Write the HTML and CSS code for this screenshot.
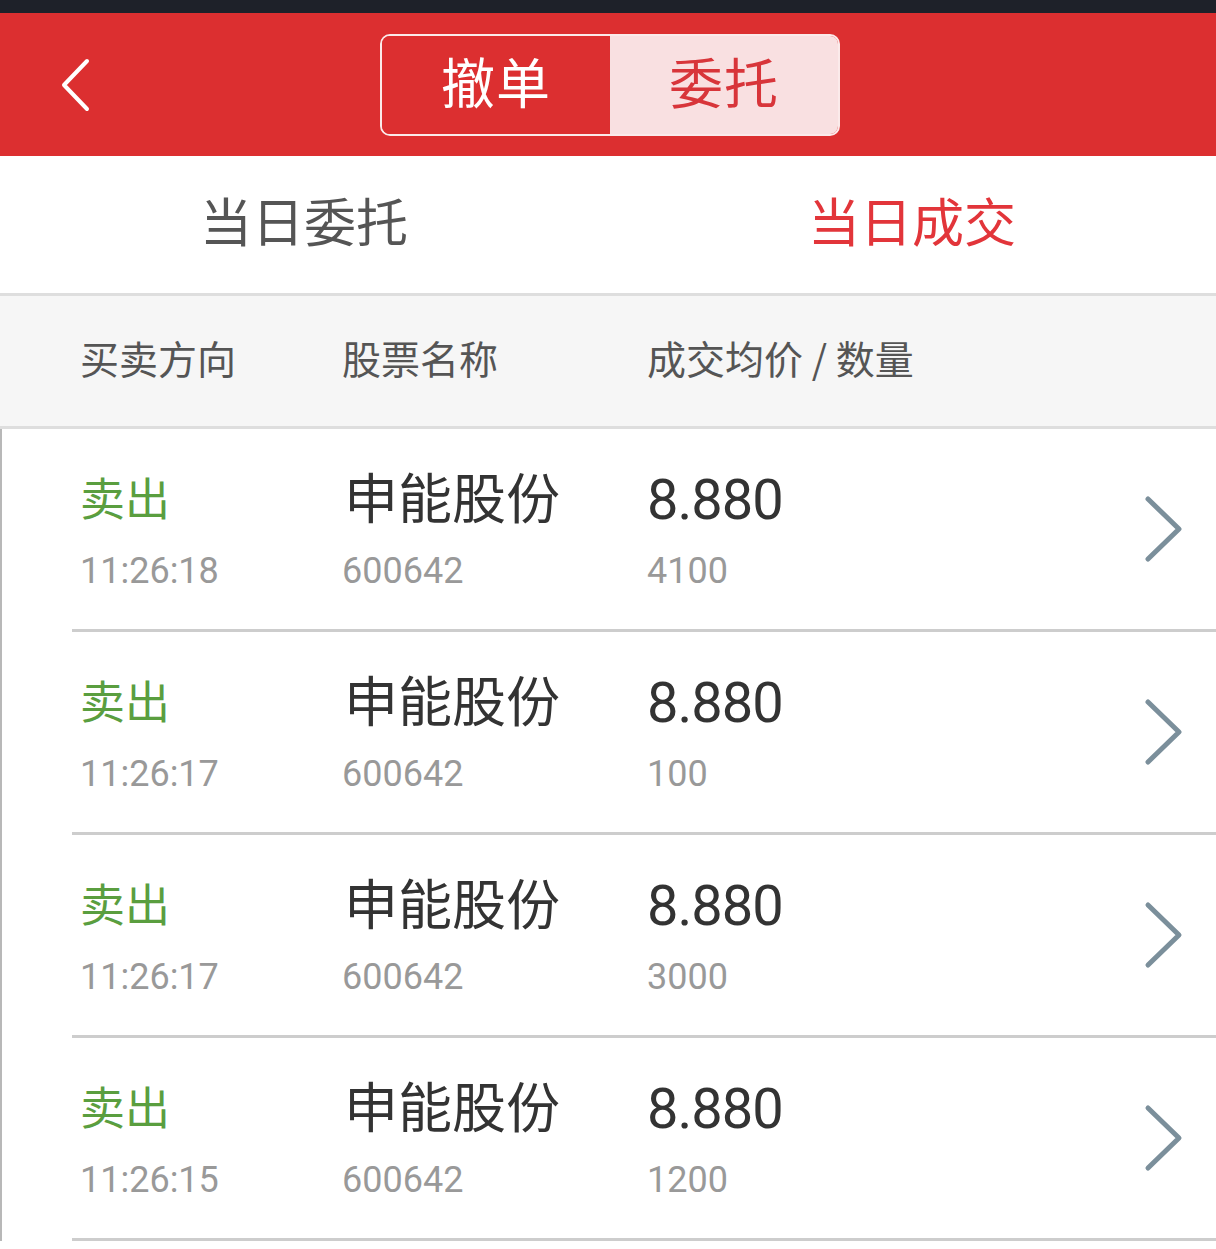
FILE: index.html
```
<!DOCTYPE html>
<html lang="zh-CN">
<head>
  <meta charset="UTF-8">
  <meta name="viewport" content="width=device-width, initial-scale=1.0">
  <title>当日成交</title>
  <link rel="stylesheet" href="styles.css">
</head>
<body>

  <div class="statusbar"></div>

  <div class="topbar">
    <div class="back">
      <svg width="32" height="56" viewBox="0 0 32 56">
        <path d="M27 3 L4 27 L27 51" fill="none" stroke="#fff" stroke-width="4" stroke-linecap="round" stroke-linejoin="round"/>
      </svg>
    </div>
    <div class="segment">
      <div class="seg seg-on">撤单</div>
      <div class="seg seg-off">委托</div>
    </div>
    <div></div>
  </div>

  <div class="tabs">
    <div class="tab">当日委托</div>
    <div class="tab tab-active">当日成交</div>
  </div>

  <div class="thead">
    <div class="col1">买卖方向</div>
    <div class="col2">股票名称</div>
    <div class="col3">成交均价 / 数量</div>
  </div>

  <div class="list">
    <div class="row">
      <div class="col1">
        <div class="main side">卖出</div>
        <div class="sub">11:26:18</div>
      </div>
      <div class="col2">
        <div class="main name">申能股份</div>
        <div class="sub">600642</div>
      </div>
      <div class="col3">
        <div class="main num">8.880</div>
        <div class="sub">4100</div>
      </div>
      <div class="arrow">
        <svg width="40" height="70" viewBox="0 0 40 70">
          <path d="M5 5 L36 35 L5 65" fill="none" stroke="#7b8f9b" stroke-width="5" stroke-linecap="round" stroke-linejoin="round"/>
        </svg>
      </div>
    </div>

    <div class="row">
      <div class="col1">
        <div class="main side">卖出</div>
        <div class="sub">11:26:17</div>
      </div>
      <div class="col2">
        <div class="main name">申能股份</div>
        <div class="sub">600642</div>
      </div>
      <div class="col3">
        <div class="main num">8.880</div>
        <div class="sub">100</div>
      </div>
      <div class="arrow">
        <svg width="40" height="70" viewBox="0 0 40 70">
          <path d="M5 5 L36 35 L5 65" fill="none" stroke="#7b8f9b" stroke-width="5" stroke-linecap="round" stroke-linejoin="round"/>
        </svg>
      </div>
    </div>

    <div class="row">
      <div class="col1">
        <div class="main side">卖出</div>
        <div class="sub">11:26:17</div>
      </div>
      <div class="col2">
        <div class="main name">申能股份</div>
        <div class="sub">600642</div>
      </div>
      <div class="col3">
        <div class="main num">8.880</div>
        <div class="sub">3000</div>
      </div>
      <div class="arrow">
        <svg width="40" height="70" viewBox="0 0 40 70">
          <path d="M5 5 L36 35 L5 65" fill="none" stroke="#7b8f9b" stroke-width="5" stroke-linecap="round" stroke-linejoin="round"/>
        </svg>
      </div>
    </div>

    <div class="row">
      <div class="col1">
        <div class="main side">卖出</div>
        <div class="sub">11:26:15</div>
      </div>
      <div class="col2">
        <div class="main name">申能股份</div>
        <div class="sub">600642</div>
      </div>
      <div class="col3">
        <div class="main num">8.880</div>
        <div class="sub">1200</div>
      </div>
      <div class="arrow">
        <svg width="40" height="70" viewBox="0 0 40 70">
          <path d="M5 5 L36 35 L5 65" fill="none" stroke="#7b8f9b" stroke-width="5" stroke-linecap="round" stroke-linejoin="round"/>
        </svg>
      </div>
    </div>
  </div>

</body>
</html>
```

FILE: styles.css
```
body {
  margin: 0;
  padding: 0;
  background: #fff;
  font-family: Roboto, "Noto Sans CJK SC", sans-serif;
  color: #333;
}

.statusbar {
  height: 13px;
  background: #1e2129; /* dark system bar */
}

.topbar {
  height: 143px;
  background: #dc2f30; /* red header */
  display: grid;
  grid-template-columns: 1fr auto 1fr;
  align-items: center;
}

.back {
  padding-left: 60px;
  display: flex;
  align-items: center;
}

.back svg {
  display: block;
  margin-top: 2px;
}

.segment {
  display: flex;
  width: 456px;
  height: 98px;
  border: 2px solid #fbeaea;
  border-radius: 10px;
  overflow: hidden;
  margin-left: 4px;
}

.seg {
  flex: 1;
  display: flex;
  align-items: center;
  justify-content: center;
  font-family: "Noto Sans CJK SC", sans-serif;
  font-size: 54px;
  letter-spacing: 1px;
  padding-bottom: 8px;
}

.seg-on {
  color: #fff;
  background: #dc2f30;
}

.seg-off {
  color: #d8353a;
  background: #f9e0e1; /* pale pink */
}

.tabs {
  display: flex;
  height: 137px;
  border-bottom: 3px solid #dedede;
}

.tab {
  flex: 1;
  display: flex;
  align-items: center;
  justify-content: center;
  font-family: "Noto Sans CJK SC", sans-serif;
  font-size: 52px;
  color: #555;
  padding-bottom: 10px;
}

.tab-active {
  color: #e2353a;
}

.thead {
  display: flex;
  align-items: center;
  box-sizing: border-box;
  height: 133px;
  padding-left: 80px;
  padding-bottom: 8px;
  background: #f6f6f6;
  border-bottom: 3px solid #dedede;
  font-family: "Noto Sans CJK SC", sans-serif;
  font-size: 39px;
  color: #555;
}

.col1 {
  width: 262px;
  flex-shrink: 0;
}

.col2 {
  width: 305px;
  flex-shrink: 0;
}

.col3 {
  flex: 1;
}

.list {
  border-left: 2px solid #b8b8b8;
}

.row {
  display: flex;
  height: 200px;
  margin-left: 70px;
  padding-left: 8px;
  border-bottom: 3px solid #cdcdcd;
}

.row .col1,
.row .col2,
.row .col3 {
  padding-top: 36px;
}

.main {
  height: 70px;
  line-height: 70px;
  white-space: nowrap;
}

.side {
  font-family: "Noto Sans CJK SC", sans-serif;
  font-size: 45px;
  line-height: 64px;
  color: #5a9e3f; /* green for sell */
}

.name {
  font-family: "Noto Sans CJK SC", sans-serif;
  font-size: 54px;
  line-height: 62px;
  color: #333;
  margin-left: 2px;
}

.num {
  font-size: 56px;
  letter-spacing: -1px;
  color: #333;
}

.sub {
  height: 72px;
  line-height: 72px;
  font-size: 36px;
  color: #999;
}

.arrow {
  display: flex;
  align-items: center;
  padding-right: 33px;
}

.arrow svg {
  display: block;
}
```
